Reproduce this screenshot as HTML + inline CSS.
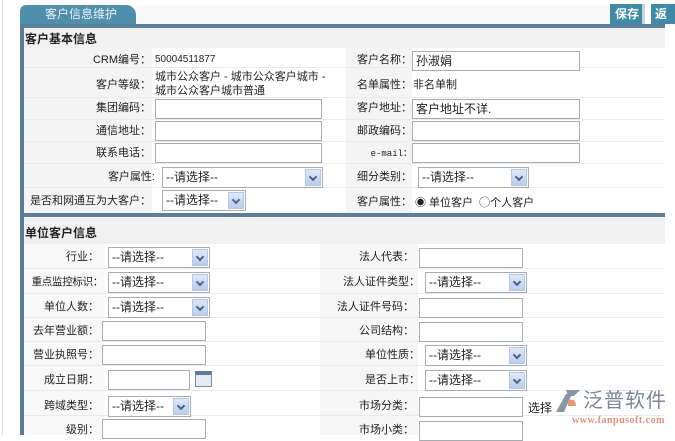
<!DOCTYPE html><html><head><meta charset="utf-8"><style>
*{margin:0;padding:0;box-sizing:border-box}
body{width:675px;height:435px;overflow:hidden;background:#fff;position:relative;font-family:"Liberation Sans","Noto Sans CJK SC",sans-serif;font-size:12px;color:#222}
.a{position:absolute}
.l{position:absolute;text-align:right;white-space:nowrap;font-size:11px;line-height:14px;z-index:2}
.t{position:absolute;white-space:nowrap;font-size:11px;line-height:14px;z-index:2}
.in{position:absolute;border:1px solid #a5acb2;background:#fff;height:20px;font-size:12px;line-height:18px;padding-left:3px}
.sel{position:absolute;border:1px solid #a5acb2;background:#fff;height:21px;font-size:12px;line-height:19px;padding-left:3px}
.sel b{position:absolute;right:1px;top:1px;width:16px;height:17px;background:linear-gradient(#dde8f8,#b9cdee);border:1px solid #b4c6e4}
.sel b:after{content:"";position:absolute;left:4px;top:4px;width:4px;height:4px;border-right:2px solid #4d6185;border-bottom:2px solid #4d6185;transform:rotate(45deg)}
.row{position:absolute;left:24px;width:641px;border-bottom:1px solid #e8ecef}
.gl{position:absolute;background:#f4f4f4}
</style></head><body>
<div class="a" style="left:2px;top:0;width:1px;height:435px;background:#d8e4ee"></div>
<div class="a" style="left:20px;top:5px;width:116px;height:20px;background:#4f8fab;border-radius:6px 10px 0 0"></div>
<div class="t" style="left:45px;top:7px;color:#e8f2f8;font-size:12px">客户信息维护</div>
<div class="a" style="left:136px;top:5px;width:475px;height:19px;background:#f7f9fb"></div>
<div class="a" style="left:610px;top:4px;width:35px;height:20px;background:#3f8aa6;border-right:3px solid #c9d4da"></div>
<div class="t" style="left:615px;top:7px;color:#fff;font-weight:bold;font-size:12px">保存</div>
<div class="a" style="left:651px;top:4px;width:24px;height:20px;background:#3f8aa6"></div>
<div class="t" style="left:655px;top:7px;color:#fff;font-weight:bold;font-size:12px">返</div>
<div class="a" style="left:20px;top:24px;width:645px;height:4px;background:#5b7f99"></div>
<div class="a" style="left:20px;top:24px;width:4px;height:411px;background:#5b7f99"></div>
<!-- section 1 -->
<div class="a" style="left:24px;top:28px;width:641px;height:20px;background:#f0f0f0"></div>
<div class="t" style="left:25px;top:32px;font-weight:bold;font-size:12px">客户基本信息</div>
<div class="gl" style="left:24px;top:48px;width:128px;height:165px"></div>
<div class="gl" style="left:346px;top:48px;width:66px;height:165px"></div>
<div class="row" style="top:48px;height:20px"></div>
<div class="row" style="top:68px;height:30px"></div>
<div class="row" style="top:98px;height:22px"></div>
<div class="row" style="top:120px;height:22px"></div>
<div class="row" style="top:142px;height:22px"></div>
<div class="row" style="top:164px;height:24px"></div>
<div class="l" style="right:524px;top:53px">CRM编号：</div><div class="t" style="left:155px;top:53px;font-size:10px">50004511877</div>
<div class="l" style="right:524px;top:78px">客户等级：</div>
<div class="t" style="left:155px;top:70px">城市公众客户 - 城市公众客户城市 -<br>城市公众客户城市普通</div>
<div class="l" style="right:524px;top:101px">集团编码：</div><div class="in" style="left:155px;top:99px;width:167px"></div>
<div class="l" style="right:524px;top:124px">通信地址：</div><div class="in" style="left:155px;top:121px;width:167px"></div>
<div class="l" style="right:524px;top:146px">联系电话：</div><div class="in" style="left:155px;top:143px;width:167px"></div>
<div class="l" style="right:520px;top:170px">客户属性:</div><div class="sel" style="left:162px;top:167px;width:161px">--请选择--<b></b></div>
<div class="l" style="right:524px;top:194px">是否和网通互为大客户：</div><div class="sel" style="left:162px;top:190px;width:84px">--请选择--<b></b></div>
<div class="l" style="right:263px;top:53px">客户名称：</div><div class="in" style="left:412px;top:51px;width:168px">孙淑娟</div>
<div class="l" style="right:263px;top:78px">名单属性：</div><div class="t" style="left:413px;top:78px">非名单制</div>
<div class="l" style="right:263px;top:101px">客户地址：</div><div class="in" style="left:412px;top:99px;width:168px">客户地址不详.</div>
<div class="l" style="right:263px;top:124px">邮政编码：</div><div class="in" style="left:412px;top:121px;width:168px"></div>
<div class="l" style="right:263px;top:147px;font-size:9px;font-family:'Liberation Mono',monospace">e-mail：</div><div class="in" style="left:412px;top:143px;width:168px"></div>
<div class="l" style="right:263px;top:170px">细分类别：</div><div class="sel" style="left:418px;top:167px;width:111px">--请选择--<b></b></div>
<div class="l" style="right:263px;top:195px">客户属性：</div>
<div class="t" style="left:415px;top:196px">◉ 单位客户 &nbsp;◯个人客户</div>
<div class="a" style="left:20px;top:213px;width:645px;height:4px;background:#5b7f99"></div>
<!-- section 2 -->
<div class="a" style="left:24px;top:217px;width:641px;height:27px;background:#f0f0f0"></div>
<div class="t" style="left:25px;top:226px;font-weight:bold;font-size:12px">单位客户信息</div>
<div class="gl" style="left:24px;top:244px;width:80px;height:191px;background:#f8f8f8"></div>
<div class="gl" style="left:320px;top:244px;width:98px;height:191px;background:#f6f6f6"></div>
<div class="row" style="top:244px;height:25px"></div>
<div class="row" style="top:269px;height:25px"></div>
<div class="row" style="top:294px;height:24px"></div>
<div class="row" style="top:318px;height:24px"></div>
<div class="row" style="top:342px;height:24px"></div>
<div class="row" style="top:366px;height:25px"></div>
<div class="row" style="top:391px;height:25px"></div>
<div class="l" style="right:576px;top:250px">行业：</div><div class="sel" style="left:108px;top:247px;width:102px">--请选择--<b></b></div>
<div class="l" style="right:572px;top:275px;font-size:10.5px;letter-spacing:-0.3px">重点监控标识：</div><div class="sel" style="left:108px;top:272px;width:102px">--请选择--<b></b></div>
<div class="l" style="right:576px;top:300px">单位人数：</div><div class="sel" style="left:108px;top:297px;width:102px">--请选择--<b></b></div>
<div class="l" style="right:576px;top:324px">去年营业额：</div><div class="in" style="left:102px;top:321px;width:104px"></div>
<div class="l" style="right:576px;top:348px">营业执照号：</div><div class="in" style="left:102px;top:345px;width:104px"></div>
<div class="l" style="right:576px;top:373px">成立日期：</div><div class="in" style="left:108px;top:370px;width:82px"></div>
<div class="a" style="left:195px;top:371px;width:17px;height:16px;border:1px solid #7d8fa6;background:#e4eaf2;border-top:4px solid #5f7a9a"></div>
<div class="l" style="right:576px;top:399px">跨域类型：</div><div class="sel" style="left:108px;top:396px;width:83px">--请选择--<b></b></div>
<div class="l" style="right:576px;top:423px">级别：</div><div class="in" style="left:102px;top:419px;width:104px"></div>
<div class="l" style="right:261px;top:250px">法人代表：</div><div class="in" style="left:419px;top:248px;width:104px"></div>
<div class="l" style="right:255px;top:275px">法人证件类型：</div><div class="sel" style="left:425px;top:272px;width:102px">--请选择--<b></b></div>
<div class="l" style="right:261px;top:300px">法人证件号码：</div><div class="in" style="left:419px;top:298px;width:104px"></div>
<div class="l" style="right:261px;top:324px">公司结构：</div><div class="in" style="left:419px;top:322px;width:104px"></div>
<div class="l" style="right:255px;top:348px">单位性质：</div><div class="sel" style="left:425px;top:345px;width:102px">--请选择--<b></b></div>
<div class="l" style="right:255px;top:373px">是否上市：</div><div class="sel" style="left:425px;top:370px;width:102px">--请选择--<b></b></div>
<div class="l" style="right:261px;top:399px">市场分类：</div><div class="in" style="left:419px;top:397px;width:104px"></div>
<div class="t" style="left:528px;top:401px;font-size:12px">选择</div>
<div class="l" style="right:261px;top:423px">市场小类：</div><div class="in" style="left:419px;top:421px;width:104px"></div>
<!-- logo -->
<svg class="a" style="left:554px;top:388px" width="28" height="26"><path d="M12 2 L26 2 L20 8 L14 8 Z" fill="#8a96a6"/><path d="M2 24 L12 6 L18 6 L10 24 Z" fill="#8a96a6"/><path d="M14 12 Q22 10 22 18 L14 18 Z" fill="#e89870"/></svg>
<div class="t" style="left:583px;top:389px;font-size:20px;line-height:24px;color:#7a8799;letter-spacing:1px">泛普软件</div>
<div class="t" style="left:572px;top:414px;font-size:10px;color:#e0907a;font-family:'Liberation Serif',serif;font-weight:bold;letter-spacing:0.5px">www.fanpusoft.com</div>
</body></html>
